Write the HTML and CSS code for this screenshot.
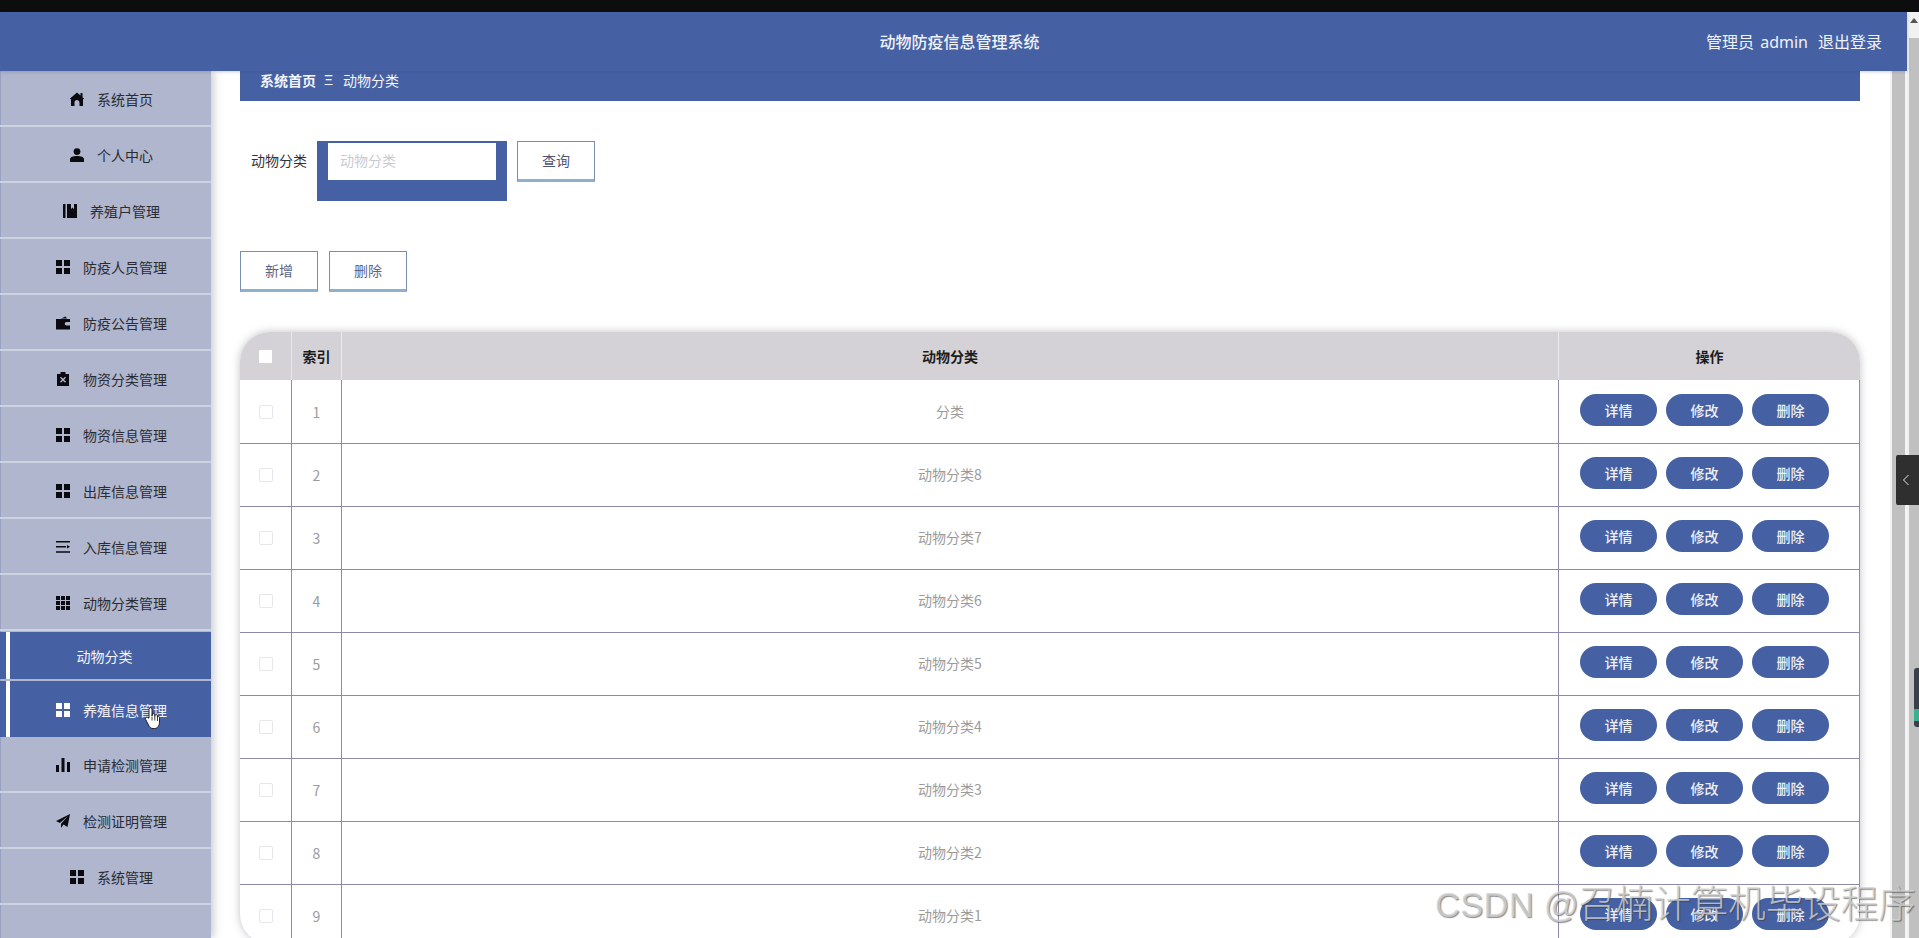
FILE: index.html
```html
<!DOCTYPE html>
<html lang="zh-CN">
<head>
<meta charset="utf-8">
<title>动物防疫信息管理系统</title>
<link rel="stylesheet" href="styles.css">
</head>
<body>
<svg class="sprites" width="0" height="0">
  <symbol id="i-grid" viewBox="0 0 14 14"><path d="M0 0h6v6H0zM8 0h6v6H8zM0 8h6v6H0zM8 8h6v6H8z"/></symbol>
</svg>
<div class="topbar"></div>
<div class="window">
  <div class="app">
    <header class="header">
      <div class="title">动物防疫信息管理系统</div>
      <div class="user"><span class="who">管理员 admin</span><span>退出登录</span></div>
    </header>
    <div class="body">
      <nav class="sidebar">
        <a class="item"><svg class="ico" viewBox="0 0 14 14"><path d="M7 .5 10.500 3.400V1h2v4.200L14 6.500 13 7.500V14H9.500V10.500a2.500 2.500 0 0 0-5 0V14H1V7.500L0 6.500z"/></svg><span>系统首页</span></a>
        <a class="item"><svg class="ico" viewBox="0 0 14 14"><circle cx="7" cy="3.600" r="3.400"/><path d="M0 14v-2.600C0 9.200 3 8 7 8s7 1.200 7 3.400V14z"/></svg><span>个人中心</span></a>
        <a class="item"><svg class="ico" viewBox="0 0 14 14"><path d="M0 0h2.500v14H0zM4 0h4v5l1.500-1.500L11 5V0h3v14H4z"/></svg><span>养殖户管理</span></a>
        <a class="item"><svg class="ico"><use href="#i-grid"/></svg><span>防疫人员管理</span></a>
        <a class="item"><svg class="ico" viewBox="0 0 14 14"><path d="M5 2.500 9.500.5 11 2.500zM0 3h14v3h-3.500a1.800 1.800 0 0 0 0 3.600H14V13.500H0z"/></svg><span>防疫公告管理</span></a>
        <a class="item"><svg class="ico" viewBox="0 0 14 14"><path fill-rule="evenodd" d="M4.500 0h5v2H13v12H1V2h3.500zM5 4.800 7 6.800l2-2 1 1-2 2 2 2-1 1-2-2-2 2-1-1 2-2-2-2z"/></svg><span>物资分类管理</span></a>
        <a class="item"><svg class="ico"><use href="#i-grid"/></svg><span>物资信息管理</span></a>
        <a class="item"><svg class="ico"><use href="#i-grid"/></svg><span>出库信息管理</span></a>
        <a class="item"><svg class="ico" viewBox="0 0 14 14"><path d="M0 1h14v1.600H0zM0 6h10v1.600H0zM0 11.200h14v1.600H0zM11 5l3 1.800L11 8.600z"/></svg><span>入库信息管理</span></a>
        <a class="item"><svg class="ico" viewBox="0 0 14 14"><path d="M0 0h4v4H0zM5 0h4v4H5zM10 0h4v4h-4zM0 5h4v4H0zM5 5h4v4H5zM10 5h4v4h-4zM0 10h4v4H0zM5 10h4v4H5zM10 10h4v4h-4z"/></svg><span>动物分类管理</span></a>
        <a class="sub">动物分类</a>
        <a class="item active"><svg class="ico"><use href="#i-grid"/></svg><span>养殖信息管理</span></a>
        <a class="item"><svg class="ico" viewBox="0 0 14 14"><path d="M0 7h3v7H0zM5.500 0h3v14h-3zM11 4h3v10h-3z"/></svg><span>申请检测管理</span></a>
        <a class="item"><svg class="ico" viewBox="0 0 14 14"><path d="M14 0 11.500 13 7.500 10.500 5 14V9.800L12 2 3.800 9 0 7z"/></svg><span>检测证明管理</span></a>
        <a class="item"><svg class="ico"><use href="#i-grid"/></svg><span>系统管理</span></a>
      </nav>
      <main class="content">
        <div class="crumb"><b>系统首页</b><i>Ξ</i><span>动物分类</span></div>
        <form class="search">
          <label class="field-label">动物分类</label>
          <div class="input-wrap"><div class="input">动物分类</div></div>
          <button type="button" class="btn">查询</button>
        </form>
        <div class="actions">
          <button type="button" class="btn muted">新增</button>
          <button type="button" class="btn muted">删除</button>
        </div>
        <div class="table-card">
          <div class="row head">
            <div class="cell c-check"><span class="box head-box"></span></div>
            <div class="cell c-index">索引</div>
            <div class="cell c-name">动物分类</div>
            <div class="cell c-ops">操作</div>
          </div>
          <div class="row"><div class="cell c-check"><span class="box"></span></div><div class="cell c-index">1</div><div class="cell c-name">分类</div><div class="cell c-ops"><span class="pill">详情</span><span class="pill">修改</span><span class="pill">删除</span></div></div>
          <div class="row"><div class="cell c-check"><span class="box"></span></div><div class="cell c-index">2</div><div class="cell c-name">动物分类8</div><div class="cell c-ops"><span class="pill">详情</span><span class="pill">修改</span><span class="pill">删除</span></div></div>
          <div class="row"><div class="cell c-check"><span class="box"></span></div><div class="cell c-index">3</div><div class="cell c-name">动物分类7</div><div class="cell c-ops"><span class="pill">详情</span><span class="pill">修改</span><span class="pill">删除</span></div></div>
          <div class="row"><div class="cell c-check"><span class="box"></span></div><div class="cell c-index">4</div><div class="cell c-name">动物分类6</div><div class="cell c-ops"><span class="pill">详情</span><span class="pill">修改</span><span class="pill">删除</span></div></div>
          <div class="row"><div class="cell c-check"><span class="box"></span></div><div class="cell c-index">5</div><div class="cell c-name">动物分类5</div><div class="cell c-ops"><span class="pill">详情</span><span class="pill">修改</span><span class="pill">删除</span></div></div>
          <div class="row"><div class="cell c-check"><span class="box"></span></div><div class="cell c-index">6</div><div class="cell c-name">动物分类4</div><div class="cell c-ops"><span class="pill">详情</span><span class="pill">修改</span><span class="pill">删除</span></div></div>
          <div class="row"><div class="cell c-check"><span class="box"></span></div><div class="cell c-index">7</div><div class="cell c-name">动物分类3</div><div class="cell c-ops"><span class="pill">详情</span><span class="pill">修改</span><span class="pill">删除</span></div></div>
          <div class="row"><div class="cell c-check"><span class="box"></span></div><div class="cell c-index">8</div><div class="cell c-name">动物分类2</div><div class="cell c-ops"><span class="pill">详情</span><span class="pill">修改</span><span class="pill">删除</span></div></div>
          <div class="row"><div class="cell c-check"><span class="box"></span></div><div class="cell c-index">9</div><div class="cell c-name">动物分类1</div><div class="cell c-ops"><span class="pill">详情</span><span class="pill">修改</span><span class="pill">删除</span></div></div>
        </div>
      </main>
      <div class="inner-scroll"><div class="inner-thumb"></div></div>
    </div>
  </div>
  <div class="outer-scroll"><div class="arrow"></div><div class="outer-thumb"></div></div>
</div>
<div class="side-tab"><svg viewBox="0 0 8 12" class="chev"><path d="M6.500 1 1.500 6l5 5"/></svg></div>
<div class="side-tab2"></div>
<svg class="hand" viewBox="0 0 16 22"><path d="M4 11V2.200a1.500 1.500 0 0 1 3 0V9l.3-1.500a1.300 1.300 0 0 1 2.500.3V9.500l.2-1a1.200 1.200 0 0 1 2.400.4v1.200a1.100 1.100 0 0 1 2.100.4v4.500c0 3.500-2 6.500-5 6.500H8c-2.500 0-3.500-1.500-4.500-3.500L.7 12.500c-.8-2 1.600-3 2.500-1.500z" fill="#fff" stroke="#111" stroke-width=".9"/><path d="M7 9.500v4M9.800 9.500v4M12.500 10v4" stroke="#111" stroke-width=".8" fill="none"/></svg>
<div class="watermark"><span class="wm-latin">CSDN @</span><span class="wm-cjk">召楠计算机毕设程序</span></div>
</body>
</html>
```
FILE: styles.css
```css
* { box-sizing: border-box; }
html, body { margin: 0; height: 938px; overflow: hidden; }
body {
  width: 1919px;
  position: relative;
  background: #fff;
  font-family: "Noto Sans CJK SC", "Open Sans", sans-serif;
  font-size: 14px;
  display: flex;
  flex-direction: column;
}
.sprites { position: absolute; }
.topbar { height: 12px; background: #0d0d0d; flex: none; }
.window { flex: 1; display: flex; min-height: 0; }
.app { flex: 1; display: flex; flex-direction: column; min-width: 0; }

.header {
  height: 59px;
  flex: none;
  background: #4661a3;
  color: #f0f2f8;
  display: flex;
  align-items: center;
  justify-content: center;
  position: relative;
  box-shadow: 0 1px 3px rgba(60, 70, 110, .25);
  z-index: 2;
}
.title { font-size: 16px; font-weight: 500; margin: 0 -12px 2px 0; }
.user {
  position: absolute;
  right: 25px;
  top: 0;
  height: 100%;
  padding-bottom: 2px;
  display: flex;
  align-items: center;
  gap: 10px;
  font-size: 16px;
  font-family: "Noto Sans", "Noto Sans CJK SC", sans-serif;
}
.who { word-spacing: 2px; }

.body { flex: 1; display: flex; min-height: 0; }
.sidebar {
  width: 211px;
  flex: none;
  background: #afb6cd;
  box-shadow: 3px 0 8px rgba(110, 115, 135, .35);
  border-left: 1px solid #98a2c0;
  display: flex;
  flex-direction: column;
  z-index: 1;
  color: #2b2b33;
}
.item {
  height: 56px;
  flex: none;
  border-bottom: 2px solid #cdd2e1;
  padding: 1px 0 0 12px;
  margin-left: -1px;
  display: flex;
  align-items: center;
  justify-content: center;
  gap: 13px;
}
.ico { width: 14px; height: 14px; fill: #0b0b0f; flex: none; }
.item.active, .sub { background: #4661a3; color: #f4f5fa; }
.sub {
  height: 47px;
  flex: none;
  margin: 1px 0 2px -1px;
  padding-right: 8px;
  display: flex;
  align-items: center;
  justify-content: center;
  border-left: 6px solid #4661a3;
  position: relative;
}
.sub::before, .item.active::before {
  content: "";
  position: absolute;
  width: 4px;
  left: 6px;
  top: 0;
  bottom: 0;
  background: #fff;
}
.sub::before { left: 0; }
.item.active { position: relative; border-bottom: 0; }
.item.active .ico { fill: #fff; }

.content { flex: 1; min-width: 0; padding: 0 30px 0 29px; }
.crumb {
  height: 30px;
  background: #4661a3;
  color: #f4f5fa;
  padding: 0 0 12px 20px;
  display: flex;
  align-items: center;
}
.crumb b { font-weight: 700; }
.crumb i { font-style: normal; font-size: 14px; margin: 0 10px 0 8px; font-family: "Liberation Sans", sans-serif; }

.search { display: flex; align-items: flex-start; margin-top: 40px; height: 60px; }
.field-label { width: 77px; padding: 7px 0 0 11px; line-height: 24px; color: #333; flex: none; }
.input-wrap { width: 190px; height: 60px; padding: 2px 11px 0 11px; background: #4661a3; margin-right: 10px; flex: none; }
.input { height: 37px; background: #fff; color: #c9cad4; padding: 0 12px 2px; line-height: 35px; }
.btn {
  width: 78px;
  height: 41px;
  background: #fff;
  border: 1px solid #7a8db5;
  border-bottom: 3px solid #8fb0cc;
  color: #4e5472;
  font: inherit;
  padding: 0 0 2px;
  flex: none;
}
.btn.muted { color: #5d6587; }
.actions { display: flex; gap: 11px; margin-top: 50px; }

.table-card {
  margin-top: 40px;
  height: 612px;
  border-radius: 30px;
  overflow: hidden;
  background: #fff;
  box-shadow: 0 0 8px rgba(120, 120, 135, .45);
}
.row { display: flex; height: 63px; border-bottom: 1px solid #8f8aa9; color: #9b9b9b; }
.row:nth-child(2) { height: 64px; }
.row.head { height: 48px; background: #d4d2d6; color: #1c1c1c; border-bottom: 0; font-weight: 700; }
.cell { display: flex; align-items: center; justify-content: center; border-right: 1px solid #8f8aa9; flex: none; }
.head .cell { border-right-color: #e9e8eb; }
.c-check { width: 52px; }
.c-index { width: 50px; }
.c-name { width: 1217px; padding-bottom: 2px; }
.head .c-name { padding-bottom: 0; }
.c-ops { flex: 1; gap: 9px; padding: 0 9px 4px 0; }
.head .c-ops { border-right: 0; padding: 0; }
.box { width: 14px; height: 14px; border: 1px solid #e6e6ec; border-radius: 2px; background: #fff; }
.head-box { width: 13px; height: 13px; border: 0; border-radius: 1px; }
.pill {
  width: 77px;
  height: 32px;
  border-radius: 16px;
  background: #4661a3;
  color: #eef0f7;
  display: flex;
  align-items: center;
  justify-content: center;
  font-weight: 500;
}

.inner-scroll { width: 17px; flex: none; padding: 0 2px; background: #f3f3f3; }
.inner-thumb { height: 100%; background: #c0c0c0; }
.outer-scroll { width: 12px; flex: none; background: #f1f1f1; position: relative; padding-top: 26px; padding-left: 2px; }
.arrow { position: absolute; top: 6px; left: 3px; border: 4px solid transparent; border-top: 0; border-bottom: 5px solid #555; }
.outer-thumb { height: 100%; background: #c0c0c0; }

.side-tab {
  position: absolute;
  left: 1896px;
  top: 455px;
  width: 23px;
  height: 50px;
  background: #2f2f2f;
  border-radius: 2px 0 0 2px;
  display: flex;
  align-items: center;
  justify-content: center;
  z-index: 5;
}
.chev { width: 8px; height: 12px; fill: none; stroke: #e8e8e8; stroke-width: 1; margin-right: 3px; }
.side-tab2 {
  position: absolute;
  left: 1914px;
  top: 668px;
  width: 5px;
  height: 59px;
  background: linear-gradient(#3a3f4a 0 70%, #3ab08c 70% 90%, #3a3f4a 90%);
  border-radius: 3px 0 0 3px;
  z-index: 5;
}
.hand { position: absolute; left: 145px; top: 707px; width: 16px; height: 22px; z-index: 5; }
.watermark {
  position: absolute;
  left: 1435px;
  top: 879px;
  font-family: "Liberation Sans", "Noto Sans CJK SC", sans-serif;
  line-height: 44px;
  white-space: nowrap;
  color: rgba(212, 212, 212, .8);
  text-shadow: 1px 1px 1px rgba(60, 60, 60, .6);
  z-index: 5;
  display: flex;
  align-items: baseline;
}
.wm-latin { font-size: 34.5px; letter-spacing: .3px; margin-right: -1px; }
.wm-cjk { font-size: 37.5px; font-family: "Noto Sans CJK SC", sans-serif; font-weight: 300; }
```
